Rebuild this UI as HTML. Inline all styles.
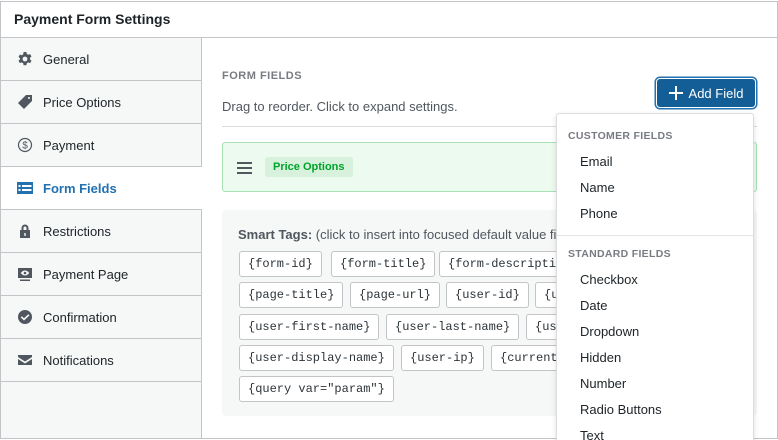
<!DOCTYPE html>
<html><head><meta charset="utf-8"><style>
*{box-sizing:border-box;margin:0;padding:0}
html,body{width:778px;height:440px;overflow:hidden}
body{background:#fff;font-family:"Liberation Sans",sans-serif;color:#2c3338;position:relative;font-size:13px}
.frame{position:absolute;left:0;top:1px;width:778px;height:438px;border:1px solid #c3c4c7}
.hdr{position:absolute;left:1px;top:2px;width:776px;height:36px;border-bottom:1px solid #c3c4c7;font-weight:bold;font-size:14px;padding:9px 0 0 13px;color:#1d2327}
.side{position:absolute;left:1px;top:38px;width:201px;height:400px;background:#f6f7f7;border-right:1px solid #c3c4c7}
.it{height:43px;border-bottom:1px solid #c3c4c7;display:flex;align-items:center;padding-left:16px;font-size:13px;color:#1d2327}
.it svg{width:16px;height:16px;margin-right:10px;fill:#50575e}
.it.act{background:#fff;color:#2271b1;font-weight:bold;margin-right:-1px}
.it.act svg{fill:#2271b1}
.lbl{position:absolute;left:222px;top:70px;font-size:11px;font-weight:bold;color:#787c82;letter-spacing:.5px}
.desc{position:absolute;left:222px;top:99px;color:#50575e;font-size:13px}
.hr{position:absolute;left:222px;top:126px;width:535px;border-top:1px solid #dcdcde}
.btn{position:absolute;left:657px;top:79px;width:98px;height:28px;background:#135e96;border-radius:3px;box-shadow:0 0 0 1px #fff,0 0 0 2.5px #2271b1;color:#fff;font-size:13px;display:flex;align-items:center;justify-content:center;gap:6px}
.po{position:absolute;left:222px;top:142px;width:535px;height:50px;background:#edfaef;border:1px solid #a7e0b2;border-radius:3px}
.po .ham{position:absolute;left:14px;top:19px;width:15px}
.po .ham i{display:block;height:2px;background:#50575e;margin-bottom:3px}
.po .pill{position:absolute;left:42px;top:14px;background:#d7f1dc;color:#00a32a;font-weight:bold;font-size:11px;padding:4px 8px;border-radius:3px}
.st{position:absolute;left:222px;top:210px;width:535px;height:206px;background:#f6f7f7;border-radius:4px}
.st .t{position:absolute;left:16px;top:17px;color:#50575e;font-size:13px;white-space:nowrap}
.chip{position:absolute;height:26px;border:1px solid #c3c4c7;background:#fff;border-radius:3px;font-family:"Liberation Mono",monospace;font-size:12px;padding:5px 8px 0;white-space:nowrap;color:#2c3338}
.dd{position:absolute;left:556px;top:113px;width:198px;height:340px;background:#fff;border:1px solid #dcdcde;border-radius:3px;box-shadow:0 2px 6px rgba(0,0,0,.12)}
.dd .h{position:absolute;left:11px;font-size:10.5px;font-weight:bold;color:#787c82;letter-spacing:.3px}
.dd .o{position:absolute;left:23px;font-size:13px;color:#1d2327}
.dd .sep{position:absolute;left:0;width:196px;top:121px;border-top:1px solid #e5e5e5}
</style></head><body>
<div class="frame"></div>
<div class="hdr">Payment Form Settings</div>
<div class="side">
<div class="it"><svg viewBox="0 0 16 16"><path d="M6.6 1h2.8l.4 2 1.4.8 1.9-.7 1.4 2.4-1.5 1.3v1.6l1.5 1.3-1.4 2.4-1.9-.7-1.4.8-.4 2H6.6l-.4-2-1.4-.8-1.9.7-1.4-2.4 1.5-1.3V7.2L1.5 5.9l1.4-2.4 1.9.7 1.4-.8zM8 5.6A2.4 2.4 0 1 0 8 10.4 2.4 2.4 0 0 0 8 5.6z"/></svg>General</div>
<div class="it"><svg viewBox="0 0 16 16"><path d="M9 1h6v6l-8 8-6-6zM12 3a1 1 0 1 0 0 2 1 1 0 0 0 0-2z"/></svg>Price Options</div>
<div class="it"><svg viewBox="0 0 16 16"><circle cx="8" cy="8" r="6.5" fill="none" stroke="#50575e" stroke-width="1.2"/><text x="8" y="11.5" font-size="10" text-anchor="middle" fill="#50575e" font-family="Liberation Sans">$</text></svg>Payment</div>
<div class="it act"><svg viewBox="0 0 16 16"><path d="M0 2h16v12H0zM1.5 5v2h2V5zm3.5 0v2h9.5V5zM1.5 9v2h2V9zm3.5 0v2h9.5V9z"/></svg>Form Fields</div>
<div class="it"><svg viewBox="0 0 16 16"><path d="M4.5 7V5a3.5 3.5 0 0 1 7 0v2H13v8H3V7zm2 0h3V5a1.5 1.5 0 0 0-3 0zM7.3 10v3h1.4v-3z"/></svg>Restrictions</div>
<div class="it"><svg viewBox="0 0 16 16"><path d="M1 2h14v10H1zM8 4.5C5.5 4.5 3.8 7 3.8 7S5.5 9.5 8 9.5 12.2 7 12.2 7 10.5 4.5 8 4.5zM8 5.7a1.3 1.3 0 1 1 0 2.6 1.3 1.3 0 0 1 0-2.6zM3 13.5h10V15H3z"/></svg>Payment Page</div>
<div class="it"><svg viewBox="0 0 16 16"><path d="M8 1a7 7 0 1 0 0 14A7 7 0 0 0 8 1zm3.3 4.3l1.2 1.1L7 11.5 3.7 8.4l1.2-1.1L7 9.2z"/></svg>Confirmation</div>
<div class="it"><svg viewBox="0 0 16 16"><path d="M1 3h14v2L8 9.5 1 5zm0 4l7 4.5L15 7v6H1z"/></svg>Notifications</div>
</div>
<div class="lbl">FORM FIELDS</div>
<div class="desc">Drag to reorder. Click to expand settings.</div>
<div class="hr"></div>
<div class="btn"><svg width="14" height="14" viewBox="0 0 14 14"><path d="M7 0v14M0 7h14" stroke="#fff" stroke-width="2"/></svg>Add Field</div>
<div class="po"><div class="ham"><i></i><i></i><i></i></div><div class="pill">Price Options</div></div>
<div class="st"><div class="t"><b>Smart Tags:</b> (click to insert into focused default value field)</div>
<div class="chip" style="left:17px;top:41px">{form-id}</div>
<div class="chip" style="left:109px;top:41px">{form-title}</div>
<div class="chip" style="left:217px;top:41px">{form-description}</div>
<div class="chip" style="left:17px;top:72px">{page-title}</div>
<div class="chip" style="left:128px;top:72px">{page-url}</div>
<div class="chip" style="left:224px;top:72px">{user-id}</div>
<div class="chip" style="left:313px;top:72px">{user-email}</div>
<div class="chip" style="left:17px;top:104px">{user-first-name}</div>
<div class="chip" style="left:164px;top:104px">{user-last-name}</div>
<div class="chip" style="left:304px;top:104px">{user-login}</div>
<div class="chip" style="left:17px;top:135px">{user-display-name}</div>
<div class="chip" style="left:179px;top:135px">{user-ip}</div>
<div class="chip" style="left:269px;top:135px">{current-url}</div>
<div class="chip" style="left:17px;top:166px">{query var="param"}</div>
</div>
<div class="dd">
<div class="h" style="top:16px">CUSTOMER FIELDS</div>
<div class="o" style="top:40px">Email</div>
<div class="o" style="top:66px">Name</div>
<div class="o" style="top:92px">Phone</div>
<div class="sep"></div>
<div class="h" style="top:134px">STANDARD FIELDS</div>
<div class="o" style="top:158px">Checkbox</div>
<div class="o" style="top:184px">Date</div>
<div class="o" style="top:210px">Dropdown</div>
<div class="o" style="top:236px">Hidden</div>
<div class="o" style="top:262px">Number</div>
<div class="o" style="top:288px">Radio Buttons</div>
<div class="o" style="top:314px">Text</div>
</div>
</body></html>
